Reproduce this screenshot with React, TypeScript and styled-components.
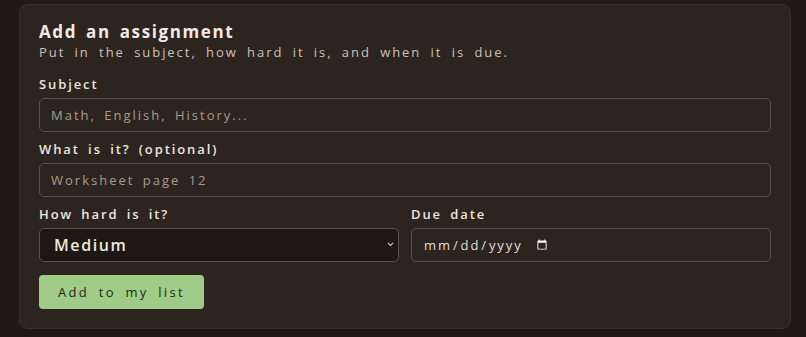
import React, { useState } from "react";
import styled, { createGlobalStyle } from "styled-components";

const GlobalStyle = createGlobalStyle`
  html, body {
    margin: 0;
    padding: 0;
    background: #1f1a16;
    color-scheme: dark;
  }
  body {
    font-family: "Open Sans", "DejaVu Sans", sans-serif;
  }
`;

const Page = styled.div`
  padding: 4px 15px 9px 19px;
`;

const Card = styled.form`
  background: #2c241f;
  border: 1px solid #3a312b;
  border-radius: 9px;
  padding: 16px 19px 19px 19px;
  display: flex;
  flex-direction: column;
`;

const Title = styled.h2`
  margin: 0;
  font-size: 17px;
  font-weight: 700;
  letter-spacing: 1.6px;
  word-spacing: 3px;
  color: #f1ebe3;
  line-height: 22px;
`;

const Subtitle = styled.p`
  margin: 0 0 14px 0;
  font-size: 13px;
  letter-spacing: 1.95px;
  word-spacing: 4px;
  color: #cbc2b6;
  line-height: 18px;
`;

const Field = styled.label`
  display: flex;
  flex-direction: column;
  gap: 5px;
  flex: 1;
  min-width: 0;
`;

const Label = styled.span`
  font-size: 13px;
  font-weight: 600;
  letter-spacing: 1.9px;
  word-spacing: 3px;
  color: #ece5dc;
  line-height: 18px;
`;

const TextInput = styled.input`
  box-sizing: border-box;
  height: 34px;
  width: 100%;
  background: #2c241f;
  border: 1px solid #5c5148;
  border-radius: 5px;
  padding: 0 11px;
  font-family: inherit;
  font-size: 13px;
  letter-spacing: 2px;
  word-spacing: 3px;
  color: #ece5dc;
  outline: none;
  &::placeholder {
    color: #a89c8f;
  }
`;

const SelectWrap = styled.div`
  position: relative;
`;

const Select = styled.select`
  box-sizing: border-box;
  appearance: none;
  height: 34px;
  width: 100%;
  background: #1e1814;
  border: 1px solid #5c5148;
  border-radius: 5px;
  padding: 0 14px;
  font-family: inherit;
  font-size: 16px;
  font-weight: 600;
  letter-spacing: 1.6px;
  color: #efe8df;
  outline: none;
`;

const Chevron = styled.svg`
  position: absolute;
  right: 5px;
  top: 14px;
  width: 7px;
  height: 5px;
  pointer-events: none;
`;

const DateInput = styled(TextInput)`
  color: #e6dfd6;
  letter-spacing: 1.9px;
  display: flex;
  &::-webkit-datetime-edit {
    flex: 0 0 auto;
  }
  &::-webkit-calendar-picker-indicator {
    margin: 0 0 0 -10px;
    padding: 0;
    width: 12px;
    height: 12px;
  }
`;

const Stack = styled.div`
  display: flex;
  flex-direction: column;
  gap: 8px;
`;

const Row = styled.div`
  display: flex;
  gap: 12px;
`;

const Button = styled.button`
  align-self: flex-start;
  margin-top: 13px;
  height: 34px;
  padding: 0 19px;
  background: #a0cb88;
  border: none;
  border-radius: 4px;
  font-family: inherit;
  font-size: 13px;
  font-weight: 500;
  letter-spacing: 2.3px;
  word-spacing: 4px;
  color: #1d2717;
  cursor: pointer;
`;

export default function App() {
  const [level, setLevel] = useState("medium");
  return (
    <>
      <GlobalStyle />
      <Page>
        <Card onSubmit={(e) => e.preventDefault()}>
          <Title>Add an assignment</Title>
          <Subtitle>Put in the subject, how hard it is, and when it is due.</Subtitle>
          <Stack>
            <Field>
              <Label>Subject</Label>
              <TextInput placeholder="Math, English, History..." />
            </Field>
            <Field>
              <Label>What is it? (optional)</Label>
              <TextInput placeholder="Worksheet page 12" />
            </Field>
            <Row>
              <Field>
                <Label>How hard is it?</Label>
                <SelectWrap>
                  <Select value={level} onChange={(e) => setLevel(e.target.value)}>
                    <option value="easy">Easy</option>
                    <option value="medium">Medium</option>
                    <option value="hard">Hard</option>
                  </Select>
                  <Chevron viewBox="0 0 7 5">
                    <path d="M1 1 L3.5 3.5 L6 1" fill="none" stroke="#cfc6bb" strokeWidth="1.1" />
                  </Chevron>
                </SelectWrap>
              </Field>
              <Field>
                <Label>Due date</Label>
                <DateInput type="date" />
              </Field>
            </Row>
          </Stack>
          <Button type="submit">Add to my list</Button>
        </Card>
      </Page>
    </>
  );
}
